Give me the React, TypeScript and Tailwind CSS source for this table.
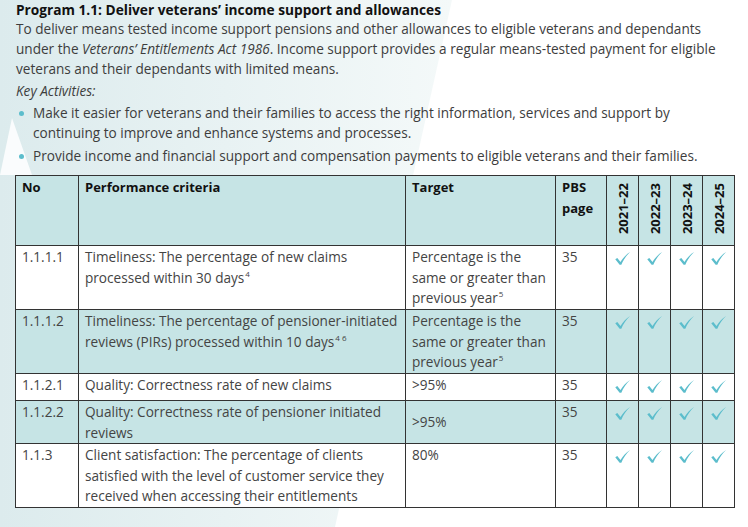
import React from "react";

const Check = () => (
  <svg width="17" height="15" viewBox="0 0 16 14" className="mx-auto block">
    <path d="M1.2 7.6 L5.3 12.8 L6.9 12.8 C8.6 8.6 11.6 4.1 15.2 0.9 C11 3.3 8 7.3 6.1 10.4 L3.1 6.5 Z" fill="#5cbdcc" />
  </svg>
);

const Sup = ({ children }: { children: React.ReactNode }) => (
  <span className="text-[8px] leading-none relative -top-[6px] ml-[1px]">{children}</span>
);

type Row = {
  no: string;
  crit: React.ReactNode;
  target: React.ReactNode;
  teal: boolean;
  h: string;
  midTarget?: boolean;
};

const rows: Row[] = [
  {
    no: "1.1.1.1",
    crit: (
      <>
        Timeliness: The percentage of new claims processed within 30 days<Sup>4</Sup>
      </>
    ),
    target: (
      <>
        Percentage is the same or greater than previous year<Sup>5</Sup>
      </>
    ),
    teal: false,
    h: "h-[64px]",
  },
  {
    no: "1.1.1.2",
    crit: (
      <>
        Timeliness: The percentage of pensioner-initiated reviews (PIRs) processed within 10 days<Sup>4 6</Sup>
      </>
    ),
    target: (
      <>
        Percentage is the same or greater than previous year<Sup>5</Sup>
      </>
    ),
    teal: true,
    h: "h-[64px]",
  },
  {
    no: "1.1.2.1",
    crit: <>Quality: Correctness rate of new claims</>,
    target: <>&gt;95%</>,
    teal: false,
    h: "h-[27px]",
  },
  {
    no: "1.1.2.2",
    crit: <>Quality: Correctness rate of pensioner initiated reviews</>,
    target: <>&gt;95%</>,
    teal: true,
    h: "h-[43px]",
    midTarget: true,
  },
  {
    no: "1.1.3",
    crit: (
      <>Client satisfaction: The percentage of clients satisfied with the level of customer service they received when accessing their entitlements</>
    ),
    target: <>80%</>,
    teal: false,
    h: "h-[63px]",
  },
];

const years = ["2021–22", "2022–23", "2023–24", "2024–25"];

export default function App() {
  const cell = "border border-[#333] align-top px-[6px] pt-[1px]";
  return (
    <div
      className="relative w-[748px] h-[527px] overflow-hidden bg-white text-[#3d3d3d]"
      style={{ fontFamily: '"Open Sans", "Noto Sans", sans-serif' }}
    >
      <svg className="absolute inset-0" width="748" height="527" viewBox="0 0 748 527">
        <defs>
          <linearGradient id="bgg" x1="0" y1="0" x2="1" y2="0">
            <stop offset="0" stopColor="#dcebed" />
            <stop offset="1" stopColor="#f4f9f9" />
          </linearGradient>
        </defs>
        <polygon points="0,0 452,0 335,527 0,527" fill="url(#bgg)" />
        <polygon points="12,118 0,175 32,175" fill="#ffffff" opacity="0.85" />
      </svg>
      <div className="relative pl-[16px] pr-[14px]">
        <h1 className="text-[13.7px] leading-[19px] font-bold text-[#111]">
          Program 1.1: Deliver veterans’ income support and allowances
        </h1>
        <p className="text-[13.6px] leading-[20px]">
          To deliver means tested income support pensions and other allowances to eligible veterans and dependants under the{" "}
          <i>Veterans’ Entitlements Act 1986</i>. Income support provides a regular means-tested payment for eligible veterans and
          their dependants with limited means.
        </p>
        <p className="mt-[2px] text-[13.6px] leading-[20px] italic">Key Activities:</p>
        <ul className="mt-[2px] text-[13.6px] leading-[20px]">
          <li className="flex">
            <span className="w-[17px] shrink-0 flex pt-[8px] pl-[3px]">
              <span className="w-[5px] h-[5px] rounded-full bg-[#5cbdcc]" />
            </span>
            <span>
              Make it easier for veterans and their families to access the right information, services and support by continuing to
              improve and enhance systems and processes.
            </span>
          </li>
          <li className="flex mt-[3px]">
            <span className="w-[17px] shrink-0 flex pt-[8px] pl-[3px]">
              <span className="w-[5px] h-[5px] rounded-full bg-[#5cbdcc]" />
            </span>
            <span>Provide income and financial support and compensation payments to eligible veterans and their families.</span>
          </li>
        </ul>
      </div>
      <table className="relative ml-[15px] mt-[9px] table-fixed border-collapse text-[13.6px] leading-[20.5px] text-[#444]">
        <colgroup>
          <col className="w-[63px]" />
          <col className="w-[327px]" />
          <col className="w-[150px]" />
          <col className="w-[51px]" />
          <col className="w-[32px]" />
          <col className="w-[32px]" />
          <col className="w-[32px]" />
          <col className="w-[32px]" />
        </colgroup>
        <thead>
          <tr className="h-[70px] bg-[#c6e4e5] text-[#111]">
            <th className={`${cell} text-left font-bold text-[13px]`}>No</th>
            <th className={`${cell} text-left font-bold text-[13px]`}>Performance criteria</th>
            <th className={`${cell} text-left font-bold text-[13px]`}>Target</th>
            <th className={`${cell} text-left font-bold text-[13px] leading-[21px]`}>
              PBS
              <br />
              page
            </th>
            {years.map((y) => (
              <th key={y} className="border border-[#333] align-bottom p-0 pb-[11px]">
                <div className="flex justify-center">
                  <span className="font-bold text-[13px] leading-[14px] [writing-mode:vertical-rl] rotate-180">{y}</span>
                </div>
              </th>
            ))}
          </tr>
        </thead>
        <tbody>
          {rows.map((r) => (
            <tr key={r.no} className={`${r.h} ${r.teal ? "bg-[#c6e4e5]" : "bg-white"}`}>
              <td className={cell}>{r.no}</td>
              <td className={`${cell} pr-[4px]`}>{r.crit}</td>
              <td className={`${cell} pr-[4px] ${r.midTarget ? "!align-middle !pt-0" : ""}`}>{r.target}</td>
              <td className={cell}>35</td>
              {years.map((y) => (
                <td key={y} className="border border-[#333] align-top p-0 pt-[5px]">
                  <Check />
                </td>
              ))}
            </tr>
          ))}
        </tbody>
      </table>
    </div>
  );
}
